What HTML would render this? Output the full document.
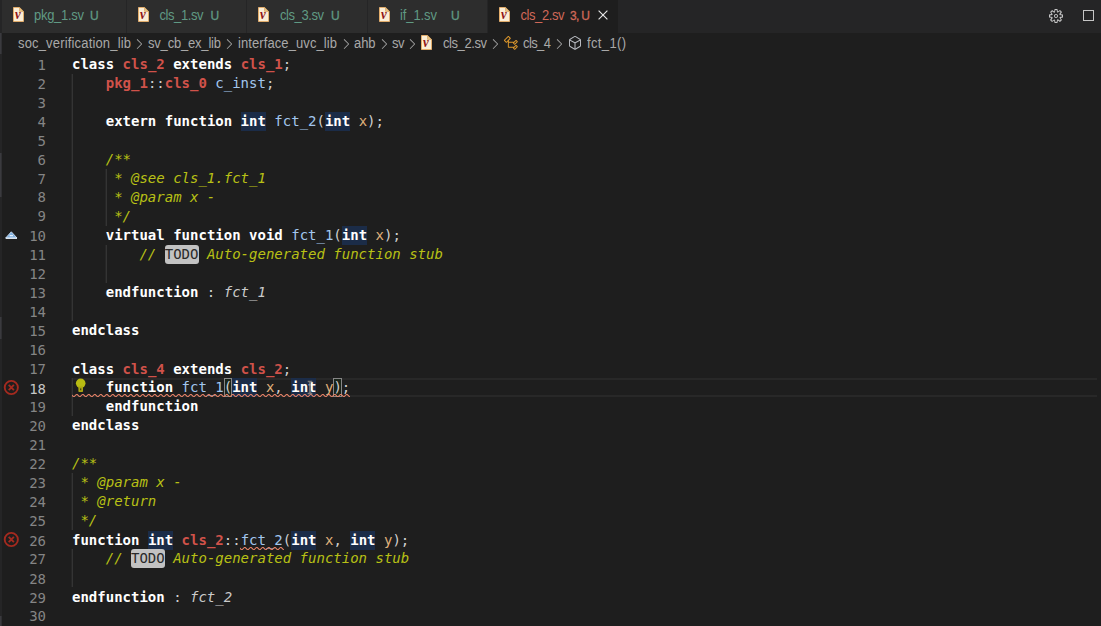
<!DOCTYPE html>
<html lang="en"><head><meta charset="utf-8"><title>cls_2.sv</title>
<style>
*{box-sizing:border-box}
html,body{margin:0;padding:0;width:1101px;height:626px;overflow:hidden;background:#1e1e1e}
body{position:relative;font-family:"Liberation Sans",sans-serif;font-size:13px;color:#d4d4d4}
.a,.tab,.fi,.sep,.tl,.ts,.bc,.ln,.cl,.g,.ic{position:absolute}
#tabs{position:absolute;left:0;top:0;width:1101px;height:33px;background:#252526}
.tab{top:0;height:33px;background:#2d2d2d}
.tab.on{background:#1e1e1e}
.tl,.ts{top:0;height:33px;line-height:31px;white-space:nowrap;font-size:13px}
.tl{color:#609a84;transform:scaleY(1.06);transform-origin:0 20px}.ts{color:#609a84;font-size:12px;-webkit-text-stroke:0.3px currentColor;line-height:32px}
.tl.on,.ts.on{color:#d06858}
.bc{top:33px;height:22px;line-height:21px;white-space:nowrap;font-size:13px;color:#a9a9a9;transform:scaleY(1.06);transform-origin:0 15.5px}
.ln{left:0;width:46px;height:19px;line-height:19px;text-align:right;color:#858585;font:14px/19px "DejaVu Sans Mono","Liberation Mono",monospace}
.ln.act{color:#c6c6c6}
.cl{left:72px;height:19px;white-space:pre;color:#d0d0d0;font:14px/19px "DejaVu Sans Mono","Liberation Mono",monospace}
.bgh,.bgt,.bgb{position:absolute;height:19px}
.bgh{background:#1b2c48}
.bgt{background:#c2c2c2;border-radius:3px}
.bgb{background:#1b251b;border:1px solid #868686}
.k{font-weight:bold;color:#fff}
.c{font-weight:bold;color:#d0524a}
.h{font-weight:bold;color:#fff}
.m{font-style:italic;color:#b8c015}
.i{font-style:italic;color:#cacaca}
.v{color:#a2c6ee}
.pa{color:#e0b27c}
.t{color:#2a2a2a}
.sl{left:0;width:2px;background:linear-gradient(90deg,#3a3a3e 0,#3a3a3e 1px,#303033 1px,#303033 2px)}
.g{width:2px;background:linear-gradient(90deg,#262626 0,#262626 1px,#343434 1px,#343434 2px)}
#cur{position:absolute;left:72px;top:378px;width:1025px;height:19px;border-top:2px solid #282828;border-bottom:2px solid #282828}
.sq{position:absolute;height:3px}
</style></head><body>
<div id="tabs"></div>
<div class="tab" style="left:2px;width:124px"></div><svg class="fi" style="left:12.6px;top:7px" width="11" height="15" viewBox="0 0 11 15"><path d="M0.5 0.5H6.6L10.5 4.4V14.5H0.5Z" fill="#fbeed6" stroke="#e2ad6c" stroke-width="1"/><path d="M6.6 0.8V4.4H10.2Z" fill="#edc98a" stroke="#d3a05c" stroke-width="0.7"/><text x="5.4" y="12.3" text-anchor="middle" font-family="Liberation Serif, serif" font-style="italic" font-weight="bold" font-size="15" fill="#8f1616" transform="translate(0.3 0) scale(0.85 1)">v</text></svg><span class="tl" style="letter-spacing:-0.292px;left:34px">pkg_1.sv</span><span class="ts" style="letter-spacing:-1.072px;left:90px">U</span><div class="tab" style="left:127px;width:119px"></div><svg class="fi" style="left:138px;top:7px" width="11" height="15" viewBox="0 0 11 15"><path d="M0.5 0.5H6.6L10.5 4.4V14.5H0.5Z" fill="#fbeed6" stroke="#e2ad6c" stroke-width="1"/><path d="M6.6 0.8V4.4H10.2Z" fill="#edc98a" stroke="#d3a05c" stroke-width="0.7"/><text x="5.4" y="12.3" text-anchor="middle" font-family="Liberation Serif, serif" font-style="italic" font-weight="bold" font-size="15" fill="#8f1616" transform="translate(0.3 0) scale(0.85 1)">v</text></svg><span class="tl" style="letter-spacing:-0.424px;left:159.5px">cls_1.sv</span><span class="ts" style="letter-spacing:-1.072px;left:210.5px">U</span><div class="tab" style="left:247px;width:120px"></div><svg class="fi" style="left:258px;top:7px" width="11" height="15" viewBox="0 0 11 15"><path d="M0.5 0.5H6.6L10.5 4.4V14.5H0.5Z" fill="#fbeed6" stroke="#e2ad6c" stroke-width="1"/><path d="M6.6 0.8V4.4H10.2Z" fill="#edc98a" stroke="#d3a05c" stroke-width="0.7"/><text x="5.4" y="12.3" text-anchor="middle" font-family="Liberation Serif, serif" font-style="italic" font-weight="bold" font-size="15" fill="#8f1616" transform="translate(0.3 0) scale(0.85 1)">v</text></svg><span class="tl" style="letter-spacing:-0.424px;left:280px">cls_3.sv</span><span class="ts" style="letter-spacing:-1.072px;left:331px">U</span><div class="tab" style="left:368px;width:119px"></div><svg class="fi" style="left:379px;top:7px" width="11" height="15" viewBox="0 0 11 15"><path d="M0.5 0.5H6.6L10.5 4.4V14.5H0.5Z" fill="#fbeed6" stroke="#e2ad6c" stroke-width="1"/><path d="M6.6 0.8V4.4H10.2Z" fill="#edc98a" stroke="#d3a05c" stroke-width="0.7"/><text x="5.4" y="12.3" text-anchor="middle" font-family="Liberation Serif, serif" font-style="italic" font-weight="bold" font-size="15" fill="#8f1616" transform="translate(0.3 0) scale(0.85 1)">v</text></svg><span class="tl" style="letter-spacing:-0.096px;left:400px">if_1.sv</span><span class="ts" style="letter-spacing:-1.072px;left:451px">U</span><div class="tab on" style="left:488px;width:130px"></div><svg class="fi" style="left:499px;top:7px" width="11" height="15" viewBox="0 0 11 15"><path d="M0.5 0.5H6.6L10.5 4.4V14.5H0.5Z" fill="#fbeed6" stroke="#e2ad6c" stroke-width="1"/><path d="M6.6 0.8V4.4H10.2Z" fill="#edc98a" stroke="#d3a05c" stroke-width="0.7"/><text x="5.4" y="12.3" text-anchor="middle" font-family="Liberation Serif, serif" font-style="italic" font-weight="bold" font-size="15" fill="#8f1616" transform="translate(0.3 0) scale(0.85 1)">v</text></svg><span class="tl on" style="letter-spacing:-0.424px;left:520.5px">cls_2.sv</span><span class="ts on" style="letter-spacing:-0.672px;left:570px">3, U</span>
<svg class="ic" style="left:594.5px;top:6.6px" width="16" height="16" viewBox="0 0 16 16"><path d="M3.6 3.6L12.4 12.4M12.4 3.6L3.6 12.4" stroke="#e6e6e6" stroke-width="1.15" fill="none"/></svg>
<svg class="ic" style="left:1048.1px;top:7.5px" width="16" height="16" viewBox="0 0 16 16"><path fill="#c5c5c5" fill-rule="evenodd" d="M9.1 4.4L8.6 2H7.4l-.5 2.4-.7.3-2-1.3-.9.8 1.3 2-.2.7-2.4.5v1.2l2.4.5.3.8-1.3 2 .8.8 2-1.3.8.3.4 2.3h1.2l.5-2.4.8-.3 2 1.3.8-.8-1.3-2 .3-.8 2.3-.4V7.4l-2.4-.5-.3-.8 1.3-2-.8-.8-2 1.3-.7-.2zM9.4 1l.5 2.4L12 2.1l2 2-1.4 2.1 2.4.4v2.8l-2.4.5L14 12l-2 2-2.1-1.4-.5 2.4H6.6l-.5-2.4L4 13.9l-2-2 1.4-2.1L1 9.4V6.6l2.4-.5L2.1 4l2-2 2.1 1.4.4-2.400h2.800zm.6 7c0 1.100-.9 2-2 2s-2-.9-2-2 .9-2 2-2 2 .9 2 2zM8 9c.6 0 1-.4 1-1s-.4-1-1-1-1 .4-1 1 .4 1 1 1z"/></svg>
<div class="a" style="left:1083px;top:10px;width:11px;height:11px;border:1px solid #c5c5c5"></div>
<div class="a" style="left:0;top:33px;width:2px;height:593px;background:#252526"></div>
<div class="a sl" style="top:33px;height:21px"></div>
<div class="a sl" style="top:153px;height:44px"></div>
<div class="a sl" style="top:317px;height:22px"></div>
<div class="a sl" style="top:616px;height:10px"></div>
<span class="bc" style="letter-spacing:0.166px;left:18px">soc_verification_lib</span><span class="bc" style="letter-spacing:-0.196px;left:148px">sv_cb_ex_lib</span><span class="bc" style="letter-spacing:0.090px;left:238px">interface_uvc_lib</span><span class="bc" style="letter-spacing:-0.102px;left:354px">ahb</span><span class="bc" style="letter-spacing:-0.500px;left:392px">sv</span><span class="bc" style="letter-spacing:-0.424px;left:443px">cls_2.sv</span><span class="bc" style="letter-spacing:-0.590px;left:523px">cls_4</span><span class="bc" style="letter-spacing:0.359px;left:587px">fct_1()</span><svg class="sep" style="left:131.1px;top:35.9px" width="16" height="16" viewBox="0 0 16 16"><path fill="#a4a4a4" d="M10.072 8.024L5.715 3.667l.618-.62L11 7.716v.618L6.333 13l-.618-.619 4.357-4.357z"/></svg><svg class="sep" style="left:221.1px;top:35.9px" width="16" height="16" viewBox="0 0 16 16"><path fill="#a4a4a4" d="M10.072 8.024L5.715 3.667l.618-.62L11 7.716v.618L6.333 13l-.618-.619 4.357-4.357z"/></svg><svg class="sep" style="left:338.1px;top:35.9px" width="16" height="16" viewBox="0 0 16 16"><path fill="#a4a4a4" d="M10.072 8.024L5.715 3.667l.618-.62L11 7.716v.618L6.333 13l-.618-.619 4.357-4.357z"/></svg><svg class="sep" style="left:376.1px;top:35.9px" width="16" height="16" viewBox="0 0 16 16"><path fill="#a4a4a4" d="M10.072 8.024L5.715 3.667l.618-.62L11 7.716v.618L6.333 13l-.618-.619 4.357-4.357z"/></svg><svg class="sep" style="left:404.1px;top:35.9px" width="16" height="16" viewBox="0 0 16 16"><path fill="#a4a4a4" d="M10.072 8.024L5.715 3.667l.618-.62L11 7.716v.618L6.333 13l-.618-.619 4.357-4.357z"/></svg><svg class="sep" style="left:487.1px;top:35.9px" width="16" height="16" viewBox="0 0 16 16"><path fill="#a4a4a4" d="M10.072 8.024L5.715 3.667l.618-.62L11 7.716v.618L6.333 13l-.618-.619 4.357-4.357z"/></svg><svg class="sep" style="left:551.1px;top:35.9px" width="16" height="16" viewBox="0 0 16 16"><path fill="#a4a4a4" d="M10.072 8.024L5.715 3.667l.618-.62L11 7.716v.618L6.333 13l-.618-.619 4.357-4.357z"/></svg><svg class="fi" style="left:421px;top:35px" width="11" height="15" viewBox="0 0 11 15"><path d="M0.5 0.5H6.6L10.5 4.4V14.5H0.5Z" fill="#fbeed6" stroke="#e2ad6c" stroke-width="1"/><path d="M6.6 0.8V4.4H10.2Z" fill="#edc98a" stroke="#d3a05c" stroke-width="0.7"/><text x="5.4" y="12.3" text-anchor="middle" font-family="Liberation Serif, serif" font-style="italic" font-weight="bold" font-size="15" fill="#8f1616" transform="translate(0.3 0) scale(0.85 1)">v</text></svg>
<svg class="ic" style="left:503.1px;top:35px" width="16" height="16" viewBox="0 0 16 16"><path fill="#e09a2c" d="M11.34 9.71h.71l2.67-2.67v-.71L13.38 5h-.7l-1.82 1.810h-5V5.560l1.860-1.850V3l-2-2H5L1 5v.710l2 2h.710l1.140-1.150v5.790l.5.5H10v.520l1.330 1.340h.710l2.670-2.670v-.710L13.370 10h-.7l-1.860 1.850h-5v-4H10v.480l1.340 1.380zm1.690-3.650l.63.63-2 2-.63-.63 2-2zm0 5l.63.63-2 2-.63-.63 2-2zM3.350 6.650l-1.290-1.300 3.290-3.290 1.300 1.290-3.300 3.300z"/></svg>
<svg class="ic" style="left:567px;top:35px" width="16" height="16" viewBox="0 0 16 16"><path fill="#b9bcc2" d="M13.51 4l-5-3h-1l-5 3-.49.86v6l.49.85 5 3h1l5-3 .49-.85v-6L13.51 4zm-6 9.560l-4.500-2.700V5.700l4.500 2.450v5.410zM3.270 4.700l4.740-2.840 4.740 2.840-4.740 2.590L3.270 4.700zm9.740 6.160l-4.500 2.700V8.150l4.500-2.450v5.160z"/></svg>
<div id="cur"></div>
<div class="g" style="left:71px;top:74px;height:247px"></div><div class="g" style="left:105px;top:169px;height:57px"></div><div class="g" style="left:105px;top:245px;height:38px"></div><div class="g" style="left:71px;top:378px;height:38px"></div><div class="g" style="left:71px;top:473px;height:57px"></div><div class="g" style="left:71px;top:549px;height:38px"></div><div class="bgh" style="left:240.57px;top:112px;width:25.29px"></div><div class="bgh" style="left:324.86px;top:112px;width:25.29px"></div><div class="bgh" style="left:341.72px;top:226px;width:25.29px"></div><div class="bgt" style="left:164.72px;top:245px;width:34.31px"></div><div class="bgb" style="left:223.72px;top:378px;width:8.43px"></div><div class="bgh" style="left:232.15px;top:378px;width:25.29px"></div><div class="bgh" style="left:291.15px;top:378px;width:25.29px"></div><div class="bgb" style="left:333.29px;top:378px;width:8.43px"></div><div class="bgh" style="left:147.86px;top:531px;width:25.29px"></div><div class="bgh" style="left:291.15px;top:531px;width:25.29px"></div><div class="bgh" style="left:350.15px;top:531px;width:25.29px"></div><div class="bgt" style="left:131.00px;top:549px;width:34.31px"></div>
<div class="ln" style="top:56px">1</div>
<div class="cl" style="top:55px"><span class="k">class</span> <span class="c">cls_2</span> <span class="k">extends</span> <span class="c">cls_1</span>;</div>
<div class="ln" style="top:75px">2</div>
<div class="cl" style="top:74px">    <span class="c">pkg_1</span>::<span class="c">cls_0</span> <span class="v">c_inst</span>;</div>
<div class="ln" style="top:94px">3</div>
<div class="ln" style="top:113px">4</div>
<div class="cl" style="top:112px">    <span class="k">extern</span> <span class="k">function</span> <span class="h">int</span> <span class="v">fct_2</span>(<span class="h">int</span> <span class="pa">x</span>);</div>
<div class="ln" style="top:132px">5</div>
<div class="ln" style="top:151px">6</div>
<div class="cl" style="top:150px">    <span class="m">/**</span></div>
<div class="ln" style="top:170px">7</div>
<div class="cl" style="top:169px">    <span class="m"> * @see cls_1.fct_1</span></div>
<div class="ln" style="top:188px">8</div>
<div class="cl" style="top:188px">    <span class="m"> * @param x -</span></div>
<div class="ln" style="top:207px">9</div>
<div class="cl" style="top:207px">    <span class="m"> */</span></div>
<div class="ln" style="top:227px">10</div>
<div class="cl" style="top:226px">    <span class="k">virtual</span> <span class="k">function</span> <span class="k">void</span> <span class="v">fct_1</span>(<span class="h">int</span> <span class="pa">x</span>);</div>
<div class="ln" style="top:246px">11</div>
<div class="cl" style="top:245px">        <span class="m">// </span><span class="t">TODO</span><span class="m"> Auto-generated function stub</span></div>
<div class="ln" style="top:265px">12</div>
<div class="ln" style="top:284px">13</div>
<div class="cl" style="top:283px">    <span class="k">endfunction</span> : <span class="i">fct_1</span></div>
<div class="ln" style="top:303px">14</div>
<div class="ln" style="top:322px">15</div>
<div class="cl" style="top:321px"><span class="k">endclass</span></div>
<div class="ln" style="top:341px">16</div>
<div class="ln" style="top:360px">17</div>
<div class="cl" style="top:360px"><span class="k">class</span> <span class="c">cls_4</span> <span class="k">extends</span> <span class="c">cls_2</span>;</div>
<div class="ln act" style="top:380px">18</div>
<div class="cl" style="top:378px">    <span class="k">function</span> <span class="v">fct_1</span><span class="b">(</span><span class="h">int</span> <span class="pa">x</span>, <span class="h">int</span> <span class="pa">y</span><span class="b">)</span>;</div>
<div class="ln" style="top:398px">19</div>
<div class="cl" style="top:397px">    <span class="k">endfunction</span></div>
<div class="ln" style="top:417px">20</div>
<div class="cl" style="top:416px"><span class="k">endclass</span></div>
<div class="ln" style="top:436px">21</div>
<div class="ln" style="top:455px">22</div>
<div class="cl" style="top:454px"><span class="m">/**</span></div>
<div class="ln" style="top:474px">23</div>
<div class="cl" style="top:473px"><span class="m"> * @param x -</span></div>
<div class="ln" style="top:493px">24</div>
<div class="cl" style="top:492px"><span class="m"> * @return</span></div>
<div class="ln" style="top:512px">25</div>
<div class="cl" style="top:511px"><span class="m"> */</span></div>
<div class="ln" style="top:532px">26</div>
<div class="cl" style="top:531px"><span class="k">function</span> <span class="h">int</span> <span class="c">cls_2</span>::<span class="v">fct_2</span>(<span class="h">int</span> <span class="pa">x</span>, <span class="h">int</span> <span class="pa">y</span>);</div>
<div class="ln" style="top:550px">27</div>
<div class="cl" style="top:549px">    <span class="m">// </span><span class="t">TODO</span><span class="m"> Auto-generated function stub</span></div>
<div class="ln" style="top:570px">28</div>
<div class="ln" style="top:589px">29</div>
<div class="cl" style="top:588px"><span class="k">endfunction</span> : <span class="i">fct_2</span></div>
<div class="ln" style="top:607px">30</div>
<svg class="sq" style="left:72px;top:394px" width="278" height="3" viewBox="0 0 278 3"><defs><pattern id="sqp" width="6" height="3" patternUnits="userSpaceOnUse"><g fill="#ec8468"><polygon points="5.5,0 2.5,3 1.1,3 4.1,0"/><polygon points="4,0 6,2 6,0.6 5.4,0"/><polygon points="0,2 1,3 2.4,3 0,0.6"/></g></pattern></defs><rect width="278" height="3" fill="url(#sqp)"/></svg>
<svg class="sq" style="left:240px;top:547px" width="44" height="3" viewBox="0 0 44 3"><rect width="44" height="3" fill="url(#sqp)"/></svg>
<svg class="ic" style="left:4px;top:230px" width="15" height="10" viewBox="0 0 15 10"><path d="M7.3 1.8L13 8H1.7Z" fill="#7fb0e0" stroke="#c9dcf0" stroke-width="0.9" stroke-linejoin="round"/><path d="M1.7 8.3H13" stroke="#e6eef6" stroke-width="1.2"/><path d="M5.6 5.6H9" stroke="#e4eefa" stroke-width="1.3"/></svg>
<svg class="ic er" style="left:3px;top:379px" width="17" height="17" viewBox="0 0 17 17"><circle cx="8.3" cy="8.5" r="6.6" fill="none" stroke="#a42a1f" stroke-width="1.9"/><path d="M5.7 5.9L10.9 11.1M10.9 5.9L5.7 11.1" stroke="#a42a1f" stroke-width="1.9" fill="none"/></svg>
<svg class="ic er" style="left:3px;top:531px" width="17" height="17" viewBox="0 0 17 17"><circle cx="8.3" cy="8.5" r="6.6" fill="none" stroke="#a42a1f" stroke-width="1.9"/><path d="M5.7 5.9L10.9 11.1M10.9 5.9L5.7 11.1" stroke="#a42a1f" stroke-width="1.9" fill="none"/></svg>
<svg class="ic" style="left:75px;top:378px" width="12" height="15" viewBox="0 0 12 15"><circle cx="5.7" cy="5.3" r="4.8" fill="#b8bb12"/><path d="M3.4 8.5H8V13.2Q8 14 7.2 14H4.2Q3.4 14 3.4 13.2Z" fill="#a9a512"/><rect x="5.1" y="10.4" width="1.2" height="1.8" fill="#3a3a10"/></svg>
<svg class="ic" style="left:306px;top:380px" width="8" height="15" viewBox="0 0 8 15"><path d="M1.7 1.5H6.3M4 1.5V13.5M1.7 13.5H6.3" stroke="#7c7c7c" stroke-width="1.6" fill="none"/></svg>
</body></html>
